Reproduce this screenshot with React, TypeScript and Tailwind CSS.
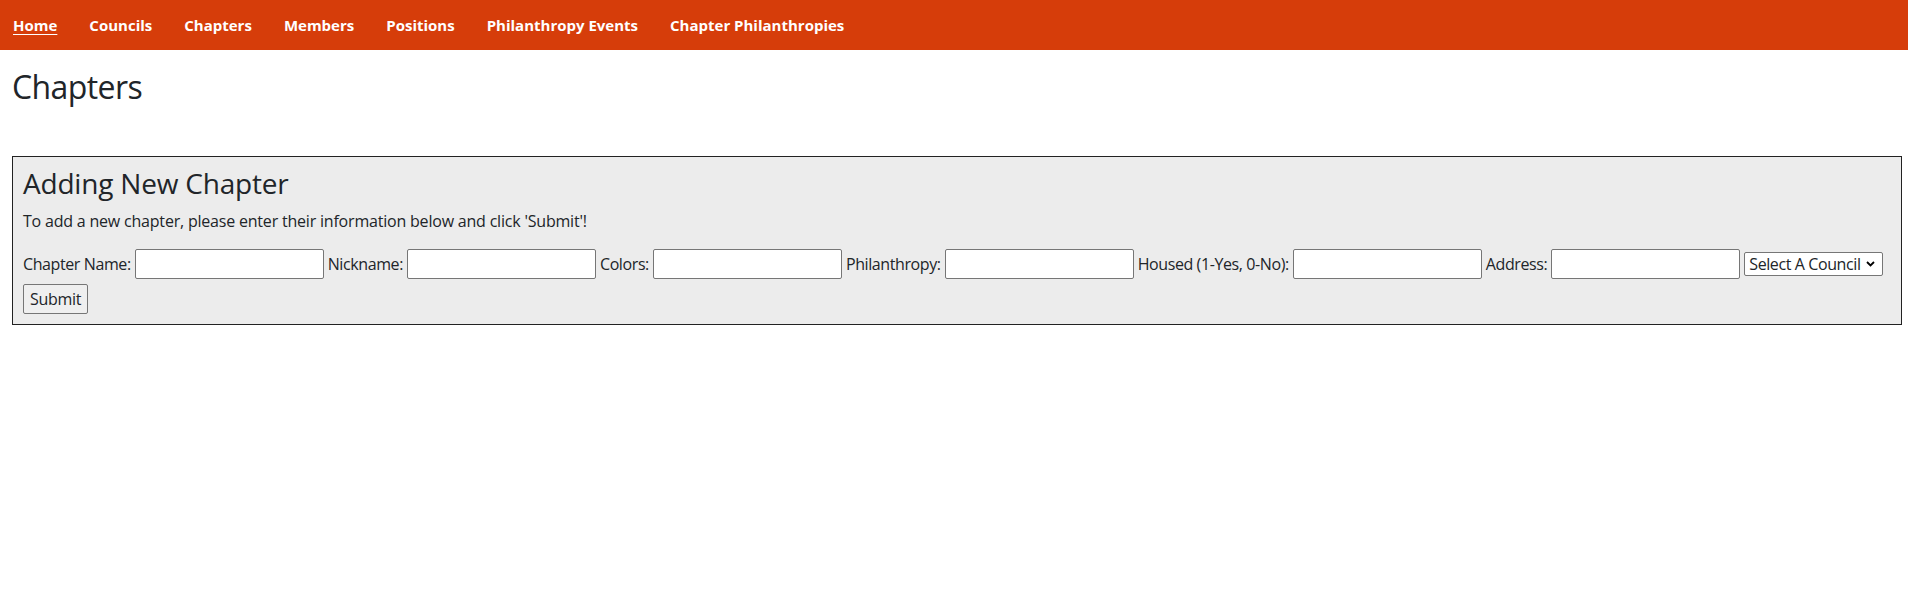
import React from "react";

const navItems = [
  "Home",
  "Councils",
  "Chapters",
  "Members",
  "Positions",
  "Philanthropy Events",
  "Chapter Philanthropies",
];

const fields = [
  "Chapter Name:",
  "Nickname:",
  "Colors:",
  "Philanthropy:",
  "Housed (1-Yes, 0-No):",
  "Address:",
];

export default function App() {
  return (
    <div className="min-h-[597px] bg-white text-[#212529] font-['Open_Sans',sans-serif] text-[16px] leading-[1.5]">
      <nav className="h-[50px] bg-[#d63d0a] flex items-center px-[13px] gap-8">
        {navItems.map((item, i) => (
          <a
            key={item}
            href="#"
            className={
              "text-white font-bold text-[15px] " +
              (i === 0 ? "underline underline-offset-[3px]" : "no-underline")
            }
          >
            {item}
          </a>
        ))}
      </nav>
      <main className="pl-3 pr-[6px]">
        <h2 className="text-[32px] leading-[1.2] font-normal mt-[18px] mb-2 tracking-[-0.6px]">
          Chapters
        </h2>
        <div className="mt-[50px] border border-[#222] bg-[#ececec] p-[10px]">
          <h3 className="text-[28px] leading-[1.2] font-normal mb-2 tracking-[-0.2px]">
            Adding New Chapter
          </h3>
          <p className="mb-4 text-[16px] leading-[24px] tracking-[-0.2px]">
            To add a new chapter, please enter their information below and click 'Submit'!
          </p>
          <div className="flex items-center gap-1 h-[30px] text-[16px] tracking-[-0.4px]">
            {fields.map((f) => (
              <React.Fragment key={f}>
                <label className="whitespace-nowrap shrink-0">{f}</label>
                <input
                  type="text"
                  className="w-[189px] h-[30px] shrink-0 bg-white border border-[#767676] rounded-[2px] px-[2px] outline-none"
                />
              </React.Fragment>
            ))}
            <div className="shrink-0 w-[139px] h-[24px] bg-white border border-[#767676] rounded-[2px] flex items-center pl-[4px] gap-[5px]">
              <span className="whitespace-nowrap leading-none">Select A Council</span>
              <svg width="9" height="6" viewBox="0 0 9 6" className="shrink-0">
                <path d="M1 1 L4.5 4.5 L8 1" stroke="#000" strokeWidth="1.8" fill="none" />
              </svg>
            </div>
          </div>
          <div className="mt-[5px]">
            <button className="h-[30px] px-[6px] bg-[#efefef] border border-[#767676] rounded-[2px] text-[16px] tracking-[-0.3px]">
              Submit
            </button>
          </div>
        </div>
      </main>
    </div>
  );
}
